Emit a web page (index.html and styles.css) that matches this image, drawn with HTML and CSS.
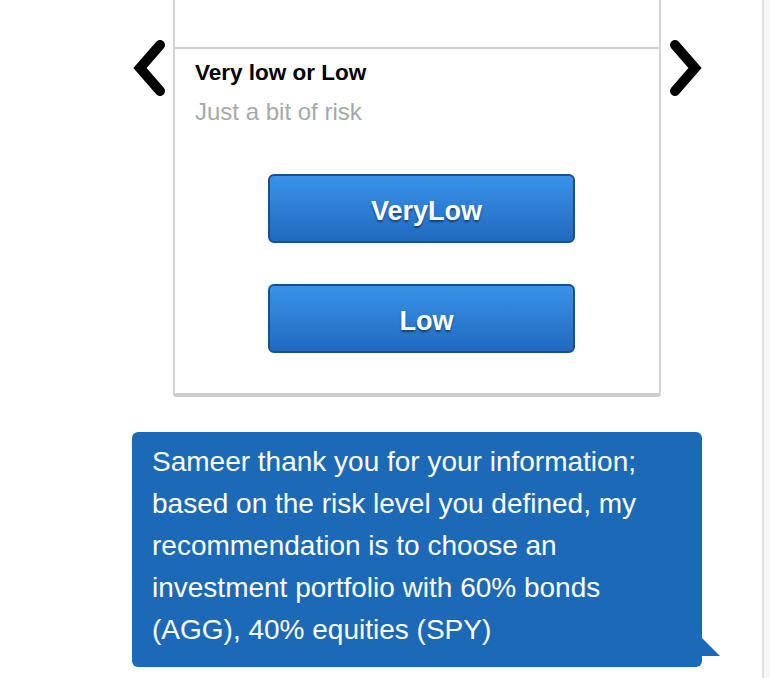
FILE: index.html
```html
<!DOCTYPE html>
<html lang="en">
<head>
<meta charset="utf-8">
<title>Risk level</title>
<link rel="stylesheet" href="styles.css">
</head>
<body>
<div class="page">
  <main class="chat">
    <section class="carousel">
      <button class="nav nav-prev" aria-label="Previous">
        <svg width="36" height="60" viewBox="0 0 36 60"><polyline points="27,7 7,30 27,53" fill="none" stroke="#000" stroke-width="10" stroke-linecap="round" stroke-linejoin="miter"/></svg>
      </button>
      <div class="card">
        <div class="card-media"></div>
        <div class="card-body">
          <h2 class="card-title">Very low or Low</h2>
          <p class="card-subtitle">Just a bit of risk</p>
          <div class="card-actions">
            <button class="action">VeryLow</button>
            <button class="action">Low</button>
          </div>
        </div>
      </div>
      <button class="nav nav-next" aria-label="Next">
        <svg width="36" height="60" viewBox="0 0 36 60"><polyline points="9,7 29,30 9,53" fill="none" stroke="#000" stroke-width="10" stroke-linecap="round" stroke-linejoin="miter"/></svg>
      </button>
    </section>
    <div class="bubble">Sameer thank you for your information; based on the risk level you defined, my recommendation is to choose an investment portfolio with 60% bonds (AGG), 40% equities (SPY)</div>
  </main>
  <aside class="scrollbar"></aside>
</div>
</body>
</html>
```
FILE: styles.css
```css
* { box-sizing: border-box; }
html, body { margin: 0; padding: 0; background: #fff; }
body { font-family: "Liberation Sans", Arial, Helvetica, sans-serif; color: #000; }

.page { display: flex; height: 678px; overflow: hidden; }
.chat { flex: 1; display: flex; flex-direction: column; }
.scrollbar { width: 8px; flex: none; border-left: 2px solid #e0e0e0; background: #f7f7f7; }

.carousel { display: flex; align-items: flex-start; padding-left: 133px; }
.nav { border: 0; background: none; padding: 0; margin-top: 38px; width: 36px; height: 60px; flex: none; cursor: pointer; }
.nav svg { display: block; }
.nav-prev { margin-right: 4px; }
.nav-next { margin-left: 5px; }

.card { width: 488px; border-left: 2px solid #d4d4d4; border-right: 2px solid #d4d4d4; border-bottom: 4px solid #cccccc; border-radius: 0 0 3px 3px; background: #fff; }
.card-media { height: 49px; border-bottom: 2px solid #cfcfcf; }
.card-body { padding: 12px 20px 40px 20px; }
.card-title { margin: 0; font-size: 22.5px; line-height: 24px; font-weight: bold; }
.card-subtitle { margin: 14px 0 0; font-size: 24px; line-height: 26px; color: #a8a8a8; }
.card-actions { display: flex; flex-direction: column; gap: 41px; margin-top: 49px; padding-left: 73px; }
.action { width: 307px; height: 69px; border: 2px solid #18508f; border-radius: 6px; background: linear-gradient(#3993e9, #2069bf); color: #fff; font-family: "Liberation Sans", Arial, sans-serif; font-size: 27px; font-weight: bold; text-shadow: 0 2px 2px rgba(0,0,0,0.45); padding: 5px 0 0 10px; cursor: pointer; }

.bubble { position: relative; margin: 35px 0 0 132px; width: 570px; height: 235px; padding: 9px 40px 16px 20px; background: #1c69b8; color: #fff; border-radius: 6px; font-size: 28px; line-height: 42px; }
.bubble::after { content: ""; position: absolute; left: 100%; bottom: 11px; width: 0; height: 0; border-left: 18px solid #1c69b8; border-top: 18px solid transparent; }
```
